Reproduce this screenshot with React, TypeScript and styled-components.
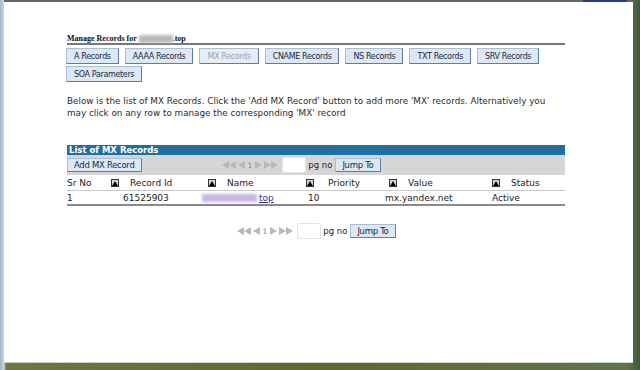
import styled, { createGlobalStyle } from "styled-components";

const GlobalStyle = createGlobalStyle`
  html, body { margin: 0; padding: 0; }
  body { width: 640px; height: 370px; overflow: hidden; }
`;

const tabs = [
  "A Records",
  "AAAA Records",
  "MX Records",
  "CNAME Records",
  "NS Records",
  "TXT Records",
  "SRV Records",
  "SOA Parameters",
];

const headerCols = "44px 97px 98px 83px 103px 73px";
const dataCols = "56px 79px 106px 77px 107px 73px";

export default function App() {
  return (
    <Desktop>
      <GlobalStyle />
      <Window>
        <TopStrip>
          <TopAccent />
        </TopStrip>
        <Content>
          <Heading>
            Manage Records for <Blur $w={34} $color="#b8b8b8" />.top
          </Heading>
          <Tabs>
            {tabs.map((t) => (
              <TabButton key={t} $disabled={t === "MX Records"}>
                {t}
              </TabButton>
            ))}
          </Tabs>
          <Intro>
            Below is the list of MX Records. Click the 'Add MX Record' button to add more 'MX' records. Alternatively you
            may click on any row to manage the corresponding 'MX' record
          </Intro>

          <TableTitle>List of MX Records</TableTitle>
          <Toolbar>
            <SmallButton>Add MX Record</SmallButton>
            <Pager $offset={80} />
          </Toolbar>
          <Row $cols={headerCols} $h={14}>
            <HeadCell>Sr No</HeadCell>
            <HeadCell><SortIcon />Record Id</HeadCell>
            <HeadCell><SortIcon />Name</HeadCell>
            <HeadCell $gap={14}><SortIcon />Priority</HeadCell>
            <HeadCell><SortIcon />Value</HeadCell>
            <HeadCell><SortIcon />Status</HeadCell>
          </Row>
          <Row $cols={dataCols} $h={12} $last>
            <Cell>1</Cell>
            <Cell>61525903</Cell>
            <Cell>
              <Blur $w={55} $color="#c8b4e6" />
              <NameLink>top</NameLink>
            </Cell>
            <Cell>10</Cell>
            <Cell>mx.yandex.net</Cell>
            <Cell>Active</Cell>
          </Row>
          <BottomPager>
            <Pager $offset={0} />
          </BottomPager>
        </Content>
      </Window>
    </Desktop>
  );
}

function Pager({ $offset }: { $offset: number }) {
  return (
    <PagerWrap style={{ marginLeft: $offset }}>
      <Arrows>
        <svg width="14" height="8" viewBox="0 0 14 8">
          <path d="M7 0v8L0 4zM14 0v8L7 4z" fill="#b8b8b8" />
        </svg>
        <svg width="7" height="8" viewBox="0 0 7 8">
          <path d="M7 0v8L0 4z" fill="#b8b8b8" />
        </svg>
        <PageNo>1</PageNo>
        <svg width="7" height="8" viewBox="0 0 7 8">
          <path d="M0 0v8l7-4z" fill="#b8b8b8" />
        </svg>
        <svg width="14" height="8" viewBox="0 0 14 8">
          <path d="M0 0v8l7-4zM7 0v8l7-4z" fill="#b8b8b8" />
        </svg>
      </Arrows>
      <PageInput />
      <PgLabel>pg no</PgLabel>
      <SmallButton>Jump To</SmallButton>
    </PagerWrap>
  );
}

function SortIcon() {
  return (
    <SortBox>
      <svg width="6" height="5" viewBox="0 0 6 5">
        <path d="M3 0l3 5H0z" fill="#000" />
      </svg>
    </SortBox>
  );
}

const Desktop = styled.div`
  width: 640px;
  height: 370px;
  box-sizing: border-box;
  padding: 0 7px 7px 4px;
  background: linear-gradient(90deg, #9fb6c9 0%, #c8d6e0 0.6%, #6f7640 1%, #5e6a2c 50%, #62734a 98%, #3f5a3a 100%);
  display: flex;
`;

const Window = styled.div`
  flex: 1;
  background: #fff;
  display: flex;
  flex-direction: column;
  border-bottom: 1px solid #cfd2c8;
`;

const TopStrip = styled.div`
  height: 2px;
  background: #5f6670;
  display: flex;
  justify-content: flex-end;
  padding-right: 6px;
`;

const TopAccent = styled.div`
  width: 44px;
  background: #2b3d7a;
`;

const Content = styled.div`
  margin: 33px 0 0 63px;
  width: 498px;
  font-family: "DejaVu Sans", Verdana, sans-serif;
  font-size: 9px;
  color: #222;
`;

const Heading = styled.div`
  font-family: "Liberation Serif", "Times New Roman", serif;
  font-weight: bold;
  font-size: 8px;
  line-height: 8px;
  height: 8px;
  color: #111;
  display: flex;
  align-items: center;
  border-bottom: 2px solid #777;
  white-space: pre;
`;

const Blur = styled.span<{ $w: number; $color: string }>`
  display: inline-block;
  width: ${(p) => p.$w}px;
  height: 8px;
  background: ${(p) => p.$color};
  filter: blur(1.5px);
`;

const Tabs = styled.div`
  display: flex;
  flex-wrap: wrap;
  column-gap: 6px;
  row-gap: 2px;
  margin: 3px 0 0 -1px;
`;

const TabButton = styled.div<{ $disabled?: boolean }>`
  height: 16px;
  box-sizing: border-box;
  padding: 0 7px;
  display: flex;
  align-items: center;
  font-size: 8px;
  letter-spacing: -0.35px;
  background: ${(p) => (p.$disabled ? "#e6edf4" : "#dce8f3")};
  color: ${(p) => (p.$disabled ? "#9aa6b3" : "#1a2844")};
  border: 1px solid #a9bdd3;
  border-right-color: #5d7ea3;
  border-bottom-color: #5d7ea3;
`;

const Intro = styled.p`
  margin: 13px 0 0;
  font-size: 8.8px;
  line-height: 12px;
  color: #2a2a2a;
  width: 498px;
`;

const TableTitle = styled.div`
  margin-top: 26px;
  height: 10px;
  background: #206fa2;
  color: #fff;
  font-weight: bold;
  font-size: 8.5px;
  line-height: 10px;
  padding-left: 2px;
`;

const Toolbar = styled.div`
  height: 20px;
  background: #d6d6d6;
  display: flex;
  align-items: center;
`;

const SmallButton = styled.div`
  height: 14px;
  box-sizing: border-box;
  padding: 0 6px;
  display: flex;
  align-items: center;
  font-size: 8.5px;
  background: #dce8f3;
  color: #1a2844;
  letter-spacing: -0.3px;
  border: 1px solid #a9bdd3;
  border-right-color: #5d7ea3;
  border-bottom-color: #5d7ea3;
  white-space: nowrap;
`;

const PagerWrap = styled.div`
  display: flex;
  align-items: center;
  font-size: 8.5px;
`;

const Arrows = styled.div`
  display: flex;
  align-items: center;
  gap: 2px;
  margin-right: 4px;
`;

const PageNo = styled.span`
  color: #888;
  font-size: 7.5px;
  margin: 0 1px;
`;

const PageInput = styled.div`
  width: 24px;
  height: 16px;
  box-sizing: border-box;
  background: #fff;
  border: 1px solid #e4e4e4;
  border-radius: 2px;
`;

const PgLabel = styled.span`
  margin: 0 3px 0 2px;
  color: #222;
`;

const Row = styled.div<{ $cols: string; $h: number; $last?: boolean }>`
  display: grid;
  grid-template-columns: ${(p) => p.$cols};
  align-items: center;
  height: ${(p) => p.$h}px;
  padding-top: 1px;
  border-bottom: ${(p) => (p.$last ? "2px solid #8a8a8a" : "1px solid #c9c9c9")};
`;

const HeadCell = styled.div<{ $gap?: number }>`
  display: flex;
  align-items: center;
  gap: ${(p) => p.$gap ?? 11}px;
  white-space: nowrap;
`;

const Cell = styled.div`
  display: flex;
  align-items: center;
  white-space: nowrap;
`;

const SortBox = styled.span`
  width: 8px;
  height: 8px;
  box-sizing: border-box;
  border: 1px solid #333;
  background: #d8d8d8;
  display: flex;
  align-items: center;
  justify-content: center;
`;

const NameLink = styled.span`
  color: #3a2f86;
  text-decoration: underline;
  margin-left: 2px;
`;

const BottomPager = styled.div`
  display: flex;
  justify-content: center;
  margin-top: 17px;
`;
